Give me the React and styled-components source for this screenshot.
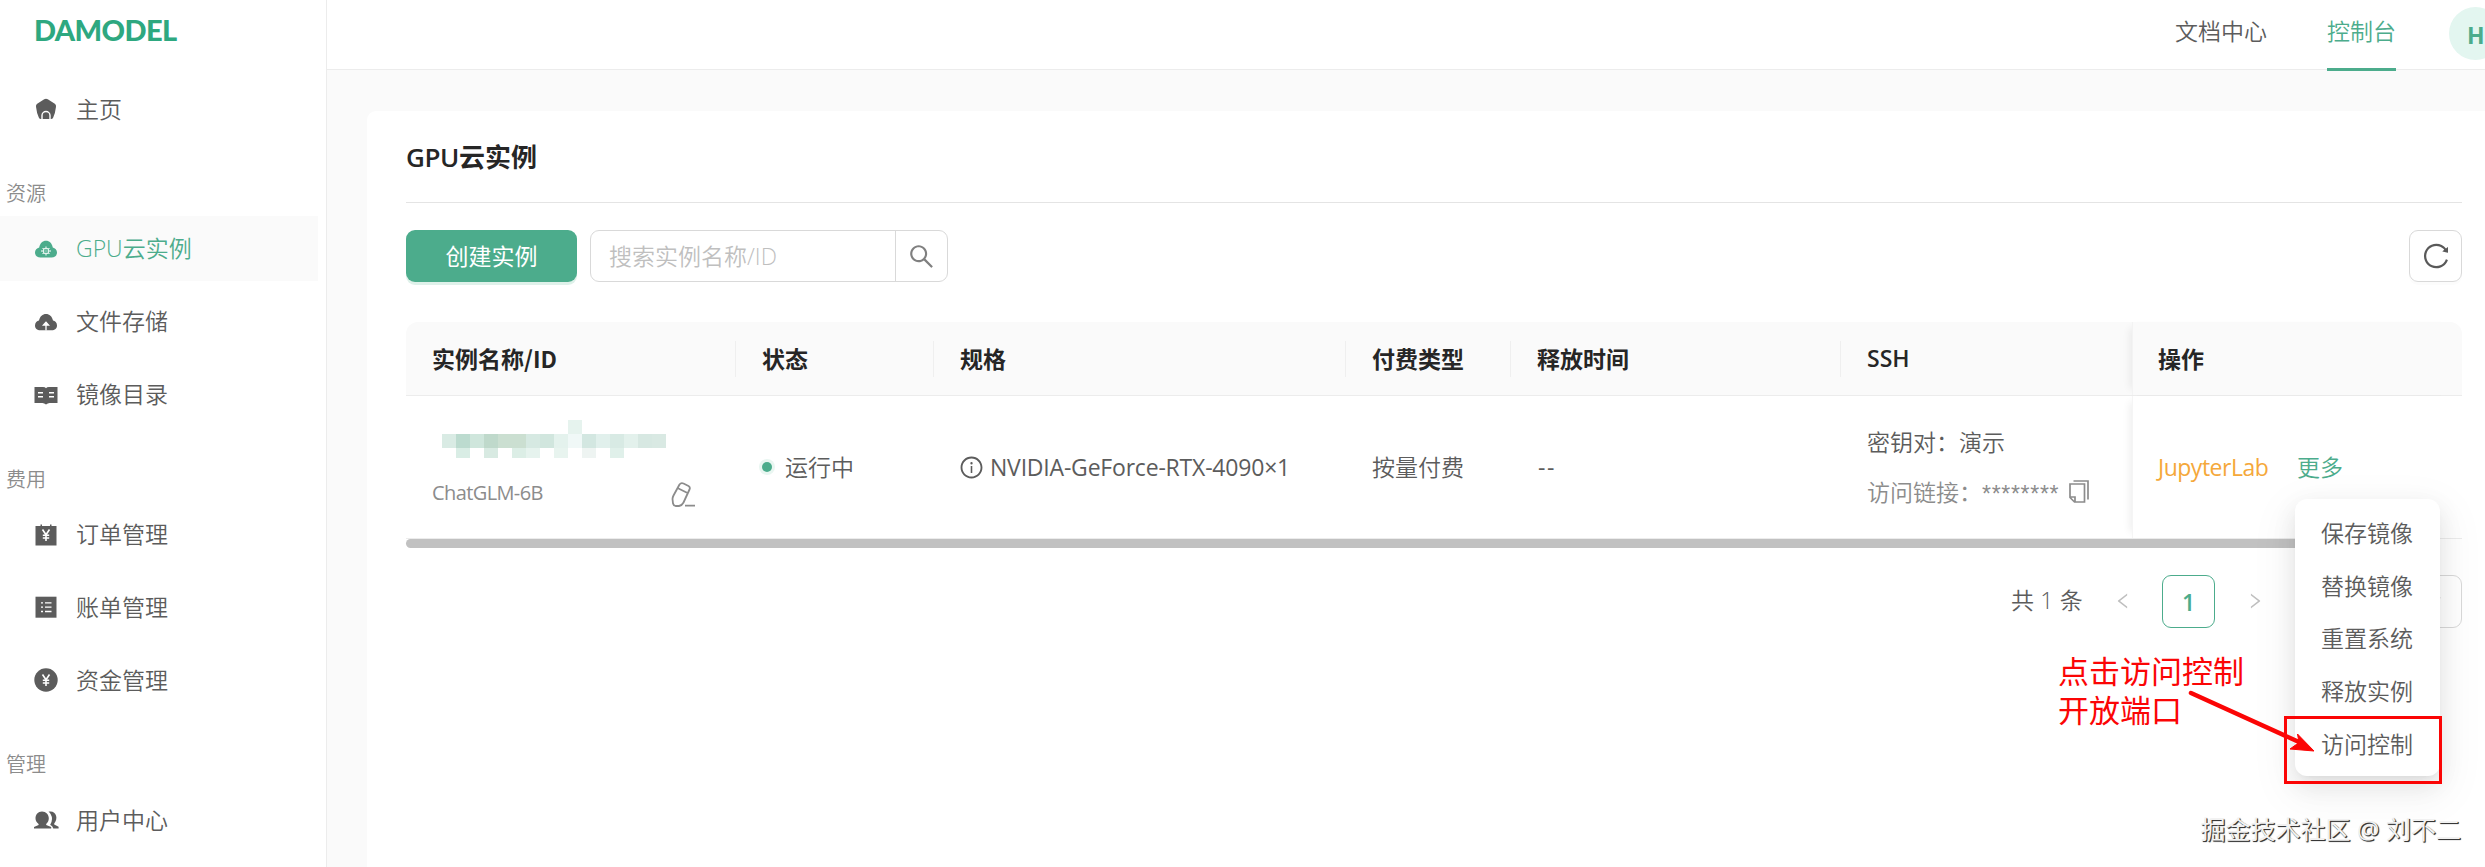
import React from 'react'
import styled, { createGlobalStyle } from 'styled-components'
import { AiOutlineReload, AiOutlineSearch, AiOutlineInfoCircle, AiOutlineLeft, AiOutlineRight, AiOutlineDown } from 'react-icons/ai'

const menu = [
    { items: [{ icon: 'home', text: '主页' }] },
    {
        title: '资源',
        items: [
            { icon: 'gpu', text: 'GPU云实例', active: true },
            { icon: 'upload', text: '文件存储' },
            { icon: 'book', text: '镜像目录' },
        ],
    },
    {
        title: '费用',
        items: [
            { icon: 'order', text: '订单管理' },
            { icon: 'bill', text: '账单管理' },
            { icon: 'money', text: '资金管理' },
        ],
    },
    { title: '管理', items: [{ icon: 'users', text: '用户中心' }] },
]

const columns = ['实例名称/ID', '状态', '规格', '付费类型', '释放时间', 'SSH']

const actions = ['保存镜像', '替换镜像', '重置系统', '释放实例', '访问控制']

// masked instance id, one colour per block
const mosaic = [
    ['', '', '', '', '', '', '', '', '', '#e6f3ee', '', '', '', '', '', ''],
    ['#d9ebe4', '#bcdbcf', '#cfe6dc', '#bfd9cb', '#cbdfd1', '#cbdfd1', '#d6e9e2', '#d1e6de', '#e4f2ed', '#f0f8f7', '#d3e7e1', '#e1f0ec', '#d8eae4', '#e3f1ec', '#d7e8e2', '#d9e9e3'],
    ['', '#d9ede5', '', '#d8eae2', '', '#dceee6', '#e6f3ee', '', '#e8f4ef', '', '#eef4f2', '', '#e0f0ea', '', '', ''],
]

const Yen = () => (
    <path d="M8.5 6.5l3.5 5.2 3.500-5.200M12 11.700v6.300M8.800 12.200h6.400M8.800 15h6.400" stroke="#fff" strokeWidth="1.600" fill="none" />
)

const shapes = {
    home: (
        <>
            <path d="M10.2 2.3Q12 1.1 13.8 2.3L20.800 6.800Q22.300 7.900 22 9.700Q21.300 16 19.200 20.500Q18.600 22 17 22H7Q5.400 22 4.800 20.500Q2.700 16 2 9.700Q1.700 7.900 3.200 6.800z" />
            <path d="M8 22.500V18.500a4 4 0 0 1 8 0V22.500" stroke="#fff" strokeWidth="1.400" fill="none" />
        </>
    ),
    gpu: (
        <>
            <path d="M6.500 20.500C3 20.500 1 18.300 1 15.600 1 13 2.800 11.200 5.200 10.600 6 6.300 8.600 3.800 12 3.800s6 2.500 6.800 6.800c2.400.600 4.200 2.400 4.200 5 0 2.700-2 4.900-5.500 4.900z" />
            <path d="M9.700 11.700h4.600v4.600H9.700zM12 9.500v2M12 16.500v2M7 14h2.500M14.500 14H17M8.500 11.500h1M14.500 11.500h1M8.500 16.500h1M14.500 16.500h1M11.500 14h1" stroke="#fff" strokeWidth="1" fill="none" />
        </>
    ),
    upload: (
        <>
            <path d="M6.500 20.300C3 20.300 1 18.200 1 15.400 1 12.600 3 10.800 5 10.400 6 6.300 8.600 4 12 4s6 2.300 7 6.400c2 .400 4 2.200 4 5 0 2.800-2 4.900-5.500 4.900z" />
            <path d="M12 20.500v-6.500M9.500 15L12 12.300l2.500 2.700z" stroke="#fff" strokeWidth="1.300" fill="#fff" />
        </>
    ),
    book: (
        <>
            <path d="M.500 4h8.500Q11.200 4 12 5.200Q12.800 4 15 4h8.500v16H15.500Q13.800 20 12 21.500Q10.200 20 8.500 20H.500z" />
            <path d="M4 9.700h5M4 13.700h5M15 9.700h5M15 13.700h5" stroke="#fff" strokeWidth="1.400" />
        </>
    ),
    order: (
        <>
            <path d="M1.500 3h5V1.500h1.500V3h8V1.500h1.500V3h5v19.500h-21z" />
            <Yen />
        </>
    ),
    bill: (
        <>
            <path d="M1.500 1.700h21v21h-21z" />
            <path d="M7 7.800h2M11 7.800h6.500M7 12.200h2M11 12.200h6.500M7 16.500h2M11 16.500h6.500" stroke="#fff" strokeWidth="1.300" />
        </>
    ),
    money: (
        <>
            <circle cx="12" cy="12" r="11.700" />
            <Yen />
        </>
    ),
    users: (
        <>
            <path d="M14.500 3.800C21.500 1.800 25 10 20.200 15.500V16.600L24.600 18.800V20.500H19.300Q18.600 18 16.200 16.800Q19.600 11 16.700 6.200Q16 4.600 14.500 3.800z" />
            <path d="M8 3.500c4 0 6.800 3 6.800 6.800 0 2.300-1 4.400-2.600 5.600v1L17.200 19v1.500H0V19l4.600-2.100v-1C2.700 14.700 1.500 12.600 1.500 10.300 1.500 6.500 4 3.500 8 3.500z" />
        </>
    ),
}

const MenuIcon = ({ name }) => (
    <Glyph viewBox="0 0 24 24">{shapes[name]}</Glyph>
)

const App = () => {
    return (
        <Page>
            <GlobalStyle />
            <Sidebar>
                <Brand>DAMODEL</Brand>
                {menu.map((group, i) => (
                    <Group key={i}>
                        {group.title && <GroupTitle>{group.title}</GroupTitle>}
                        {group.items.map((item) => (
                            <MenuItem key={item.text} $active={item.active}>
                                <MenuIcon name={item.icon} />
                                {item.text}
                            </MenuItem>
                        ))}
                    </Group>
                ))}
            </Sidebar>
            <Main>
                <TopBar>
                    <TopLink>文档中心</TopLink>
                    <TopLink $active>控制台</TopLink>
                    <Avatar>H</Avatar>
                </TopBar>
                <Card>
                    <Title><TitleLatin>GPU</TitleLatin>云实例</Title>
                    <Tools>
                        <CreateButton>创建实例</CreateButton>
                        <Search>
                            <SearchText>搜索实例名称/ID</SearchText>
                            <SearchButton><AiOutlineSearch /></SearchButton>
                        </Search>
                        <RefreshButton><AiOutlineReload /></RefreshButton>
                    </Tools>
                    <Table>
                        <HeadRow>
                            {columns.map((name) => (
                                <HeadCell key={name}>{name}</HeadCell>
                            ))}
                            <FixedHead>操作</FixedHead>
                        </HeadRow>
                        <Row>
                            <NameCell>
                                <Mosaic>
                                    {mosaic.flat().map((color, i) => (
                                        <Block key={i} $color={color} />
                                    ))}
                                </Mosaic>
                                <NameLine>
                                    ChatGLM-6B
                                    <EditIcon viewBox="0 0 24 25">
                                        <path d="M8.500 2.500Q10 .500 12.500 1.500L17.500 4Q19.500 5.200 18.500 7.500L12.500 20.500Q11 23.500 8 24H4.500Q2.500 23.500 2 21.500L1.500 17Q1.500 15.500 2.500 13.500zM7 6.300L16.500 11M14 23.700H24" />
                                    </EditIcon>
                                </NameLine>
                            </NameCell>
                            <StatusCell><Dot />运行中</StatusCell>
                            <Cell>
                                <InfoIcon />
                                <Spec>NVIDIA-GeForce-RTX-4090×1</Spec>
                            </Cell>
                            <Cell>按量付费</Cell>
                            <Cell><Dashes>--</Dashes></Cell>
                            <SshCell>
                                <span>密钥对：演示</span>
                                <LinkLine>
                                    访问链接：<Stars>********</Stars>
                                    <CopyIcon viewBox="0 0 20 23">
                                        <path d="M4.500 1H19V19.500M1 4h14.500v18H5.500L1 17.500zM1 17h5v5" />
                                    </CopyIcon>
                                </LinkLine>
                            </SshCell>
                            <FixedCell>
                                <JupyterLink>JupyterLab</JupyterLink>
                                <More>
                                    更多
                                    <Dropdown>
                                        {actions.map((action) => (
                                            <DropItem key={action}>{action}</DropItem>
                                        ))}
                                        <Highlight />
                                    </Dropdown>
                                </More>
                            </FixedCell>
                        </Row>
                        <ScrollBar />
                    </Table>
                    <Pagination>
                        <Total>共 1 条</Total>
                        <Arrow><AiOutlineLeft /></Arrow>
                        <PageNumber>1</PageNumber>
                        <Arrow><AiOutlineRight /></Arrow>
                        <PageSize><AiOutlineDown /></PageSize>
                    </Pagination>
                </Card>
            </Main>
            <Note>点击访问控制<br />开放端口</Note>
            <NoteArrow viewBox="0 0 130 66">
                <path d="M4 5L112 54" stroke="#fb0505" strokeWidth="4.500" strokeLinecap="round" />
                <path d="M127 63L103 61L112 54.500L110.500 46z" fill="#fb0505" stroke="#fb0505" />
            </NoteArrow>
            <Watermark>掘金技术社区 @ 刘不二</Watermark>
        </Page>
    )
}

const GlobalStyle = createGlobalStyle`
    * {
        box-sizing: border-box;
    }

    body {
        margin: 0;
        overflow: hidden;
        background: #fafafa;
        font-family: "Open Sans", "Noto Sans CJK SC", sans-serif;
        font-size: 23px;
        font-weight: 350;
        line-height: 34px;
        color: #5c5c5c;
    }
`;

const Page = styled.div`
    position: relative;
    display: flex;
    width: 2485px;
    height: 867px;
    overflow: hidden;
`;

const Sidebar = styled.aside`
    flex: none;
    width: 327px;
    background: #fff;
    border-right: 1px solid #ececec;
`;

const Brand = styled.div`
    height: 60px;
    margin-bottom: 16px;
    padding-left: 34px;
    line-height: 59px;
    font-family: Lato, sans-serif;
    font-size: 29px;
    font-weight: 900;
    letter-spacing: -0.6px;
    color: #2ea880;
`;

const Group = styled.div`
    display: flex;
    flex-direction: column;
    gap: 7.8px;
    padding-bottom: 37.2px;
`;

const GroupTitle = styled.div`
    height: 30px;
    padding-left: 6px;
    line-height: 31px;
    font-size: 20px;
    color: #8c8c8c;
`;

const MenuItem = styled.div`
    display: flex;
    align-items: center;
    gap: 18px;
    width: 318px;
    height: 65px;
    padding-left: 34px;
    white-space: nowrap;
    color: ${(props) => (props.$active ? '#4cac8c' : '#5c5c5c')};
    background: ${(props) => (props.$active ? '#fafafa' : 'transparent')};
`;

const Glyph = styled.svg`
    flex: none;
    width: 24px;
    height: 24px;
    margin-top: 1px;
    overflow: visible;
    fill: currentColor;
`;

const Main = styled.main`
    flex: 1;
    display: flex;
    flex-direction: column;
    min-width: 0;
`;

const TopBar = styled.header`
    display: flex;
    justify-content: flex-end;
    height: 70px;
    margin-bottom: 41px;
    background: #fff;
    border-bottom: 1px solid #ececec;
`;

const TopLink = styled.a`
    height: 71px;
    margin-right: ${(props) => (props.$active ? '53px' : '60px')};
    padding-top: 14px;
    color: ${(props) => (props.$active ? '#4cac8c' : '#5c5c5c')};
    border-bottom: ${(props) => (props.$active ? '3px solid #4cac8c' : 'none')};
`;

const Avatar = styled.div`
    flex: none;
    width: 53px;
    height: 53px;
    margin: 7px -17px 0 0;
    padding-left: 18px;
    border-radius: 50%;
    line-height: 56px;
    font-weight: 700;
    background: #e3f6f0;
    color: #4cac8c;
`;

const Card = styled.section`
    flex: 1;
    margin-left: 40px;
    padding: 0 23px 0 39px;
    background: #fff;
    border-top-left-radius: 9px;
`;

const Title = styled.h1`
    height: 92px;
    margin: 0 0 27px;
    border-bottom: 1px solid #e4e4e4;
    line-height: 92px;
    font-size: 26px;
    font-weight: 700;
    color: #262626;
`;

const TitleLatin = styled.span`
    font-weight: 600;
    letter-spacing: -0.4px;
`;

const Tools = styled.div`
    display: flex;
    height: 52px;
    margin-bottom: 40px;
`;

const CreateButton = styled.button`
    width: 171px;
    margin-right: 13px;
    padding: 0;
    border: none;
    border-radius: 9px;
    font: inherit;
    font-weight: 400;
    color: #fff;
    background: #4cac8c;
    box-shadow: 0 3px 0 #dff1ea;
`;

const Search = styled.div`
    display: flex;
    width: 358px;
    border: 1px solid #d9d9d9;
    border-radius: 9px;
`;

const SearchText = styled.div`
    flex: 1;
    padding-left: 18px;
    line-height: 51px;
    color: #bfbfbf;
`;

const SearchButton = styled.div`
    display: flex;
    align-items: center;
    justify-content: center;
    width: 52px;
    border-left: 1px solid #d9d9d9;
    font-size: 29px;
    color: #808080;
`;

const RefreshButton = styled.div`
    display: flex;
    align-items: center;
    justify-content: center;
    width: 53px;
    margin-left: auto;
    border: 1px solid #d9d9d9;
    border-radius: 9px;
    font-size: 30px;
    color: #595959;
    box-shadow: 0 3px 0 #fcfcfc;
`;

const Table = styled.div`
    width: 2056px;
    margin-bottom: 27px;
`;

const HeadRow = styled.div`
    display: grid;
    grid-template-columns: 330px 198px 412px 165px 330px 291px 330px;
    height: 74px;
    border-bottom: 1px solid #ececec;
    border-radius: 12px 12px 0 0;
    background: #fafafa;
`;

const Row = styled(HeadRow)`
    height: 143px;
    border-radius: 0;
    background: #fff;
`;

const HeadCell = styled.div`
    display: flex;
    align-items: center;
    padding: 0 0 2px 26px;
    font-family: "Noto Sans CJK SC", sans-serif;
    font-weight: 700;
    color: #262626;
    background: linear-gradient(#efefef, #efefef) right center / 1px 36px no-repeat;

    &:nth-child(6) {
        font-family: "Open Sans", sans-serif;
        font-weight: 600;
        background: none;
    }
`;

const FixedHead = styled(HeadCell)`
    background: none;
    box-shadow: inset 1px 0 0 #f3f3f3, -8px 0 8px -6px rgba(0, 0, 0, 0.07);
`;

const Cell = styled.div`
    display: flex;
    align-items: center;
    padding-left: 26px;
    white-space: nowrap;
`;

const FixedCell = styled(Cell)`
    gap: 28px;
    box-shadow: inset 1px 0 0 #f5f5f5, -8px 0 8px -6px rgba(0, 0, 0, 0.07);
`;

const NameCell = styled.div`
    padding: 24px 0 0 26px;
`;

const Mosaic = styled.div`
    display: grid;
    grid-template-columns: repeat(16, 14px);
    grid-template-rows: 14px 14px 10px;
    margin: 0 0 18px 10px;
`;

const Block = styled.i`
    background: ${(props) => props.$color || 'transparent'};
`;

const NameLine = styled.div`
    display: flex;
    justify-content: space-between;
    width: 263px;
    font-size: 20px;
    font-weight: 400;
    letter-spacing: -0.6px;
    color: #8c8c8c;
`;

const EditIcon = styled.svg`
    width: 24px;
    height: 25px;
    margin-top: 6px;
    fill: none;
    stroke: #8c8c8c;
    stroke-width: 1.8;
    stroke-linejoin: round;
`;

const StatusCell = styled(Cell)`
    gap: 13px;
`;

const Dot = styled.span`
    width: 10px;
    height: 10px;
    border-radius: 50%;
    background: #4cac8c;
    box-shadow: 0 0 0 3px #e9f6f1;
`;

const InfoIcon = styled(AiOutlineInfoCircle)`
    margin: 0 6px 0 -1px;
    font-size: 25px;
`;

const Spec = styled.span`
    font-weight: 400;
    letter-spacing: -0.2px;
`;

const Dashes = styled.span`
    padding-left: 1px;
    font-weight: 400;
    letter-spacing: 1.5px;
`;

const SshCell = styled.div`
    display: flex;
    flex-direction: column;
    gap: 16px;
    padding: 29px 0 0 26px;
    white-space: nowrap;
`;

const LinkLine = styled.div`
    display: flex;
    color: #8c8c8c;
`;

const Stars = styled.span`
    width: 87px;
    padding-top: 2px;
    font-family: "Liberation Sans", sans-serif;
    letter-spacing: 0.7px;
`;

const CopyIcon = styled.svg`
    width: 20px;
    height: 23px;
    margin-top: 5px;
    fill: none;
    stroke: #8c8c8c;
    stroke-width: 1.7;
`;

const JupyterLink = styled.a`
    width: 111px;
    font-weight: 400;
    letter-spacing: -0.5px;
    color: #f5a83a;
`;

const More = styled.div`
    position: relative;
    color: #4cac8c;
`;

const Dropdown = styled.div`
    position: absolute;
    z-index: 2;
    top: 49px;
    left: -2px;
    width: 145px;
    height: 277px;
    padding: 8px 0 0 26px;
    border-radius: 12px;
    background: #fff;
    box-shadow: 0 9px 24px rgba(0, 0, 0, 0.09), 0 4px 9px -6px rgba(0, 0, 0, 0.12), 0 14px 42px 12px rgba(0, 0, 0, 0.04);
`;

const DropItem = styled.div`
    height: 52.7px;
    line-height: 52px;
    color: #5c5c5c;
`;

const Highlight = styled.div`
    position: absolute;
    top: 217px;
    left: -11px;
    width: 158px;
    height: 68px;
    border: 3px solid #fb0505;
`;

const ScrollBar = styled.div`
    width: 1960px;
    height: 9px;
    border-radius: 5px;
    background: #c1c1c1;
`;

const Pagination = styled.div`
    display: flex;
    justify-content: flex-end;
    align-items: center;
    height: 53px;
`;

const Total = styled.span`
    margin: -3px 23px 0 0;
    letter-spacing: 0.2px;
    white-space: pre;
`;

const Arrow = styled.span`
    display: flex;
    align-items: center;
    justify-content: center;
    width: 33px;
    margin-top: -2px;
    font-size: 20px;
    color: #bfbfbf;
`;

const PageNumber = styled.span`
    width: 53px;
    height: 53px;
    margin: 0 23px 0 23px;
    border: 1px solid #4cac8c;
    border-radius: 9px;
    line-height: 53px;
    text-align: center;
    font-weight: 600;
    color: #4cac8c;
`;

const PageSize = styled.span`
    display: flex;
    align-items: center;
    justify-content: flex-end;
    width: 150px;
    height: 53px;
    margin-left: 41px;
    padding-right: 18px;
    border: 1px solid #d9d9d9;
    border-radius: 9px;
    font-size: 18px;
    color: #bfbfbf;
`;

const Note = styled.div`
    position: absolute;
    left: 2058px;
    top: 652px;
    font-size: 31px;
    font-weight: 400;
    line-height: 39px;
    color: #fb0505;
`;

const NoteArrow = styled.svg`
    position: absolute;
    z-index: 3;
    left: 2187px;
    top: 688px;
    width: 130px;
    height: 66px;
`;

const Watermark = styled.div`
    position: absolute;
    right: 24px;
    bottom: 21px;
    font-size: 25px;
    font-weight: 400;
    white-space: nowrap;
    color: #f2f2f2;
    text-shadow: 1px 1px 1px #333, 1px 1px 0 #555;
`;

export default App
